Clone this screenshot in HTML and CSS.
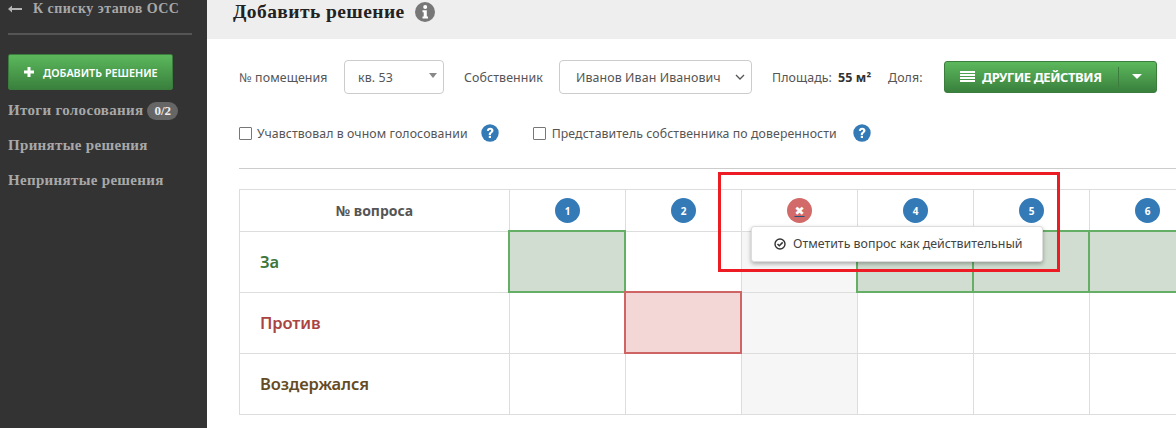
FILE: index.html
```html
<!DOCTYPE html>
<html lang="ru">
<head>
<meta charset="utf-8">
<title>Добавить решение</title>
<link rel="stylesheet" href="styles.css">
</head>
<body>
<div class="app">
  <aside class="sidebar">
    <a class="back"><span class="back-arrow">
      <svg width="14" height="8" viewBox="0 0 14 8"><path d="M0 4l4-3.500V3h10v2H4v2.500z" fill="#b5b5b5"/></svg>
    </span>К списку этапов ОСС</a>
    <div class="side-rule"></div>
    <div class="add-btn"><span class="add-plus">
      <svg width="10" height="10" viewBox="0 0 10 10"><path d="M3.500 0h3v3.500H10v3H6.500V10h-3V6.500H0v-3h3.500z" fill="#fff"/></svg>
    </span>ДОБАВИТЬ РЕШЕНИЕ</div>
    <nav class="side-nav">
      <a class="side-link">Итоги голосования <span class="badge">0/2</span></a>
      <a class="side-link">Принятые решения</a>
      <a class="side-link">Непринятые решения</a>
    </nav>
  </aside>
  <main class="main">
    <header class="page-head">
      <h1 class="page-title">Добавить решение</h1>
      <svg class="info-icon" width="20" height="20" viewBox="0 0 20 20"><circle cx="10" cy="10" r="10" fill="#777"/><circle cx="10.200" cy="5" r="2" fill="#fff"/><path d="M7.500 8.200h4.300v6.300h1.200v2H7.500v-2h1.200v-4.300H7.500z" fill="#fff"/></svg>
    </header>
    <section class="content">
      <div class="form-row">
        <span class="lbl lbl-room">№ помещения</span>
        <div class="select select-room"><span>кв. 53</span><i class="select-tri"></i></div>
        <span class="lbl lbl-owner">Собственник</span>
        <div class="select select-owner"><span>Иванов Иван Иванович</span>
          <svg class="select-chev" width="10" height="6" viewBox="0 0 10 6"><path d="M1 1l4 4 4-4" fill="none" stroke="#555" stroke-width="1.300"/></svg>
        </div>
        <span class="lbl lbl-area">Площадь:</span>
        <b class="area-val">55 м²</b>
        <span class="lbl lbl-share">Доля:</span>
        <div class="split-btn">
          <div class="split-main">
            <svg width="15" height="11" viewBox="0 0 15 11"><path d="M0 0h15v2H0zM0 3h15v2H0zM0 6h15v2H0zM0 9h15v2H0z" fill="#fff"/></svg>
            ДРУГИЕ ДЕЙСТВИЯ
          </div>
          <div class="split-caret"><i></i></div>
        </div>
      </div>
      <div class="check-row">
        <label class="check"><i class="box"></i>Учавствовал в очном голосовании</label>
        <svg class="help help-first" width="18" height="18" viewBox="0 0 18 18"><circle cx="9" cy="9" r="8.700" fill="#337ab7"/><path d="M5.800 6.700C6 4.800 7.400 3.800 9.200 3.800c1.900 0 3.300 1.100 3.300 2.800 0 1.300-.8 2-1.700 2.600-.6.400-.9.700-.9 1.300v.4H7.800v-.6c0-1.100.5-1.700 1.300-2.200.6-.4 1-.7 1-1.300 0-.6-.4-1-1-1-.7 0-1.100.4-1.200 1.100z" fill="#fff"/><rect x="7.800" y="11.800" width="2.200" height="2.200" fill="#fff"/></svg>
        <label class="check check-second"><i class="box"></i>Представитель собственника по доверенности</label>
        <svg class="help help-second" width="18" height="18" viewBox="0 0 18 18"><circle cx="9" cy="9" r="8.700" fill="#337ab7"/><path d="M5.800 6.700C6 4.800 7.400 3.800 9.200 3.800c1.900 0 3.300 1.100 3.300 2.800 0 1.300-.8 2-1.700 2.600-.6.400-.9.700-.9 1.300v.4H7.800v-.6c0-1.100.5-1.700 1.300-2.200.6-.4 1-.7 1-1.300 0-.6-.4-1-1-1-.7 0-1.100.4-1.200 1.100z" fill="#fff"/><rect x="7.800" y="11.800" width="2.200" height="2.200" fill="#fff"/></svg>
      </div>
      <div class="rule"></div>
      <div class="grid-wrap">
        <table class="vote">
          <colgroup><col class="c0"><col class="cn"><col class="cn"><col class="cn"><col class="cn"><col class="cn"><col class="cn"></colgroup>
          <tr class="r-head">
            <th class="q-title">№ вопроса</th>
            <td><span class="num">1</span></td>
            <td><span class="num">2</span></td>
            <td><span class="num num-bad"><span class="x">✖</span></span></td>
            <td><span class="num">4</span></td>
            <td><span class="num">5</span></td>
            <td><span class="num">6</span></td>
          </tr>
          <tr class="r-row">
            <th class="t-za">За</th>
            <td class="green"></td><td></td><td class="dis"></td><td class="green"></td><td class="green"></td><td class="green"></td>
          </tr>
          <tr class="r-row">
            <th class="t-pr">Против</th>
            <td></td><td class="red"></td><td class="dis"></td><td></td><td></td><td></td>
          </tr>
          <tr class="r-row">
            <th class="t-vo">Воздержался</th>
            <td></td><td></td><td class="dis"></td><td></td><td></td><td></td>
          </tr>
        </table>
        <div class="popover">
          <svg width="12" height="12" viewBox="0 0 12 12"><circle cx="6" cy="6" r="5" fill="none" stroke="#333" stroke-width="1.400"/><path d="M3.500 6l1.800 1.800L8.700 4.400" fill="none" stroke="#333" stroke-width="1.500"/></svg>
          Отметить вопрос как действительный
        </div>
        <div class="annot"></div>
      </div>
    </section>
  </main>
</div>
</body>
</html>
```
FILE: styles.css
```css
* { box-sizing: border-box; }
html, body { margin: 0; padding: 0; height: 428px; overflow: hidden; background: #fff; }
body { font-family: "Noto Sans", "Open Sans", sans-serif; color: #555; }
.app { display: flex; height: 428px; width: 1176px; }

.sidebar { width: 207px; flex: none; background: #333; padding: 0 15px 0 8px; color: #b0b0b0; }
.back { display: flex; align-items: center; height: 14px; font: bold 14px "Liberation Serif", serif; color: #a8a8a8; letter-spacing: .46px; white-space: nowrap; margin-top: 2px; }
.back-arrow { display: flex; width: 25px; }
.side-rule { height: 2px; width: 184px; background: #555; margin-top: 17px; }
.add-btn { display: flex; align-items: center; width: 165px; height: 36px; margin-top: 19px; padding-left: 15px; border-radius: 2px; border: 1px solid #3a7d3c; background: linear-gradient(#5cb85c, #39803d); color: #fff; font-size: 10.800px; font-weight: 600; white-space: nowrap; letter-spacing: 0; }
.add-plus { display: flex; width: 19px; }
.side-nav { display: flex; flex-direction: column; margin-top: 3px; }
.side-link { display: flex; align-items: center; height: 35px; font: bold 15px "Liberation Serif", serif; color: #a8a8a8; white-space: nowrap; letter-spacing: .32px; }
.badge { display: inline-block; height: 18px; line-height: 18px; margin-left: 4px; padding: 0 7px; border-radius: 9px; background: #666; color: #eee; font-size: 13px; letter-spacing: 0; }

.main { flex: 1; min-width: 0; overflow: hidden; }
.page-head { display: flex; align-items: center; height: 39px; padding: 0 0 16px 26px; background: #eee; }
.page-title { margin: 0; font: bold 19.500px "Liberation Serif", serif; color: #222; white-space: nowrap; letter-spacing: .42px; }
.info-icon { margin-left: 10px; }

.content { padding: 21px 0 0 32px; width: 969px; }
.form-row { display: flex; align-items: center; height: 34px; font-size: 12.400px; letter-spacing: .1px; white-space: nowrap; }
.lbl { color: #555; }
.lbl-room { width: 105px; }
.select { display: flex; align-items: center; height: 34px; border: 1px solid #ccc; border-radius: 4px; background: #fff; color: #555; }
.select-room { width: 100px; padding-left: 13px; position: relative; }
.select-tri { position: absolute; right: 6px; top: 12px; border: 4px solid transparent; border-top: 5px solid #888; border-bottom: 0; }
.lbl-owner { margin-left: 20px; width: 95px; }
.select-owner { width: 193px; padding: 0 6px 0 16px; justify-content: space-between; }
.select-chev { flex: none; }
.lbl-area { margin-left: 20px; width: 66px; }
.area-val { width: 50px; color: #333; font-size: 12.500px; }
.lbl-share { width: 56px; }
.split-btn { display: flex; height: 32px; width: 213px; margin-top: -1px; border-radius: 3px; background: linear-gradient(#5cb85c, #39803d); border: 1px solid #3a7d3c; color: #fff; font-size: 13px; font-weight: 700; letter-spacing: 0; }
.split-main { display: flex; align-items: center; gap: 7px; width: 173px; padding-left: 15px; letter-spacing: -.42px; }
.split-caret { flex: 1; display: flex; align-items: center; justify-content: center; position: relative; }
.split-caret::before { content: ""; position: absolute; left: 0; top: 5px; bottom: 5px; width: 1px; background: #3a7d3c; }
.split-caret i { border: 5px solid transparent; border-top: 5px solid #fff; border-bottom: 0; }

.check-row { display: flex; align-items: center; height: 18px; margin-top: 30px; font-size: 12.300px; letter-spacing: .1px; white-space: nowrap; }
.check { display: flex; align-items: center; color: #555; }
.box { display: block; width: 13px; height: 13px; margin-right: 5px; border: 1px solid #777; border-radius: 1px; background: #fff; }
.help { flex: none; }
.help-first { margin-left: 13px; }
.help-second { margin-left: 16px; }
.check-second { margin-left: 34px; }
.check-second .box { margin-right: 6px; }

.rule { height: 1px; background: #ccc; margin-top: 26px; width: 937px; }
.grid-wrap { position: relative; margin-top: 20px; }
.vote { border-collapse: collapse; table-layout: fixed; width: 966px; }
.c0 { width: 270px; }
.cn { width: 116px; }
.vote th, .vote td { border: 1px solid #ddd; padding: 0; text-align: center; }
.r-head { height: 42px; }
.r-row { height: 61px; }
.q-title { font-size: 14px; font-weight: 700; color: #555; }
.r-row th { text-align: left; padding: 0 0 2px 20px; font-size: 16.500px; font-weight: 600; letter-spacing: -.1px; }
.t-za { color: #3c763d; }
.t-pr { color: #a94442; }
.t-vo { color: #654b24; }
.num { display: inline-flex; align-items: center; justify-content: center; width: 25px; height: 25px; border-radius: 50%; background: #337ab7; color: #fff; font-size: 10px; font-weight: 700; vertical-align: middle; }
.num-bad { background: #d26a6a; }
.x { font-size: 12px; font-family: "DejaVu Sans", sans-serif; text-decoration: underline; text-decoration-color: #23527c; }
.vote td.green, .vote td.red { position: relative; }
.vote td.green { background: #d0ddd0; }
.vote td.red { background: #f3d6d6; }
.vote td.green::after, .vote td.red::after { content: ""; position: absolute; inset: -2px -1px -1px -2px; border: 2px solid #65ae65; }
.vote td.red::after { border-color: #ce6464; }
.vote td.dis { background: #f6f6f6; }

.popover { position: absolute; left: 512px; top: 37px; display: flex; align-items: center; gap: 7px; width: 292px; height: 36px; padding: 0 0 1px 22px; background: #fff; border-radius: 3px; border: 1px solid #ddd; box-shadow: 0 2px 4px rgba(0,0,0,.3); font-size: 12.400px; color: #444; white-space: nowrap; }
.annot { position: absolute; left: 479px; top: -17px; width: 342px; height: 100px; border: 3px solid #ed1c24; pointer-events: none; }
```
